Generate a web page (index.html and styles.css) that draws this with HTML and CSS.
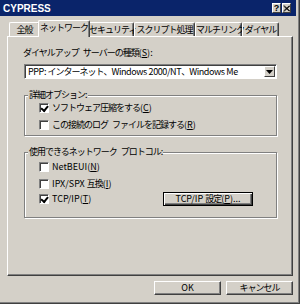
FILE: index.html
```html
<!DOCTYPE html>
<html lang="ja">

<head>
    <meta charset="UTF-8">
    <title>CYPRESS</title>
    <link rel="stylesheet" href="styles.css">
</head>

<body>
    <div class="window">
        <div class="titlebar">
            <span class="title">CYPRESS</span>
            <div class="caption-buttons">
                <span class="cap-btn help">?</span>
                <span class="cap-btn">
                    <svg width="8" height="7" viewBox="0 0 8 7">
                        <path d="M0.5 0.5 L7 6.5 M1.5 0.5 L8 6.5 M7 0.5 L0.5 6.5 M8 0.5 L1.5 6.5" stroke="#000" stroke-width="1" />
                    </svg>
                </span>
            </div>
        </div>

        <div class="content">
            <div class="tabs">
                <div class="tab">全般</div>
                <div class="tab active">ネットワーク</div>
                <div class="tab">セキュリティ</div>
                <div class="tab">スクリプト処理</div>
                <div class="tab">マルチリンク</div>
                <div class="tab">ダイヤル</div>
            </div>

            <div class="panel">
                <div class="field-label">ダイヤルアップ サーバーの種類<span class="en">(<u>S</u>):</span></div>
                <div class="select">
                    <span class="select-text"><span class="en">PPP: </span>インターネット、<span class="en">Windows 2000/NT</span>、<span class="en">Windows Me</span></span>
                    <span class="select-btn">
                        <svg width="7" height="4" viewBox="0 0 7 4">
                            <path d="M0 0 H7 L3.5 4 Z" fill="#000" />
                        </svg>
                    </span>
                </div>

                <fieldset class="group">
                    <legend>詳細オプション:</legend>
                    <div class="check">
                        <span class="box checked"></span>ソフトウェア圧縮をする<span class="en">(<u>C</u>)</span>
                    </div>
                    <div class="check">
                        <span class="box"></span>この接続のログ ファイルを記録する<span class="en">(<u>R</u>)</span>
                    </div>
                </fieldset>

                <fieldset class="group protocols">
                    <legend>使用できるネットワーク プロトコル:</legend>
                    <div class="check">
                        <span class="box"></span><span class="en">NetBEUI(<u>N</u>)</span>
                    </div>
                    <div class="check">
                        <span class="box"></span><span class="en">IPX/SPX&nbsp;</span>互換<span class="en">(<u>I</u>)</span>
                    </div>
                    <div class="check tcp">
                        <span class="box checked"></span><span class="en">TCP/IP(<u>T</u>)</span>
                        <div class="btn default"><span class="en">TCP/IP&nbsp;</span>設定<span class="en">(<u>P</u>)...</span></div>
                    </div>
                </fieldset>
            </div>

            <div class="footer">
                <div class="btn"><span class="en">OK</span></div>
                <div class="btn">キャンセル</div>
            </div>
        </div>
    </div>
</body>

</html>
```

FILE: styles.css
```css
body {
    margin: 0;
    font-family: "Noto Sans CJK JP", sans-serif;
    font-size: 9px;
    letter-spacing: -1px;
    word-spacing: 3px;
    color: #000;
}

.en {
    letter-spacing: 0;
    word-spacing: 0;
}

u {
    text-decoration: underline;
    text-underline-offset: 1px;
}

.window {
    width: 300px;
    height: 304px;
    box-sizing: border-box;
    background-color: #d4d0c8;
    border-right: 1px solid #404040;
    border-bottom: 1px solid #404040;
    box-shadow: inset -1px -1px #808080;
    overflow: hidden;
}

.titlebar {
    height: 16px;
    width: 296px;
    background-color: #0a246a;
    display: flex;
    align-items: center;
    justify-content: space-between;
}

.title {
    font-family: "Liberation Sans", sans-serif;
    font-weight: bold;
    font-size: 10px;
    letter-spacing: 0;
    color: #fff;
    padding-left: 3px;
}

.caption-buttons {
    display: flex;
    gap: 1px;
    padding-right: 5px;
}

.cap-btn {
    width: 9px;
    height: 10px;
    box-sizing: border-box;
    background-color: #d4d0c8;
    border-top: 1px solid #fff;
    border-left: 1px solid #fff;
    border-right: 1px solid #404040;
    border-bottom: 1px solid #404040;
    display: flex;
    align-items: center;
    justify-content: center;
}

.cap-btn.help {
    font-family: "Liberation Sans", sans-serif;
    font-weight: bold;
    font-size: 9px;
    letter-spacing: 0;
    line-height: 8px;
}

.content {
    padding: 4px 6px 0 7px;
}

.tabs {
    display: flex;
    align-items: flex-end;
    height: 16px;
    padding-left: 2px;
    position: relative;
    z-index: 1;
}

.tab {
    height: 14px;
    box-sizing: border-box;
    text-align: center;
    white-space: nowrap;
    line-height: 13px;
    border-top: 1px solid #fff;
    border-left: 1px solid #fff;
    border-right: 1px solid #404040;
    border-radius: 2px 2px 0 0;
    box-shadow: inset -1px 0 #808080;
}

.tab:nth-child(1) { width: 31px; }
.tab:nth-child(2) { width: 52px; }
.tab:nth-child(3) { width: 46px; }
.tab:nth-child(4) { width: 61px; }
.tab:nth-child(5) { width: 47px; }
.tab:nth-child(6) { width: 37px; }

.tab.active {
    height: 17px;
    margin: 0 -2px -1px;
    line-height: 14px;
    background-color: #d4d0c8;
    position: relative;
    z-index: 2;
}

.panel {
    height: 240px;
    box-sizing: border-box;
    padding: 10px 16px 0 16px;
    border-top: 1px solid #fff;
    border-left: 1px solid #fff;
    border-right: 1px solid #404040;
    border-bottom: 1px solid #404040;
    box-shadow: inset -1px -1px #808080;
}

.field-label {
    line-height: 12px;
    margin-bottom: 5px;
    margin-left: -1px;
}

.select {
    height: 15px;
    width: 253px;
    box-sizing: border-box;
    background-color: #fff;
    border-top: 1px solid #808080;
    border-left: 1px solid #808080;
    border-right: 1px solid #fff;
    border-bottom: 1px solid #fff;
    box-shadow: inset 1px 1px #404040;
    display: flex;
    align-items: center;
    padding: 1px 1px 1px 3px;
}

.select-text {
    flex: 1;
    line-height: 12px;
    white-space: nowrap;
    word-spacing: 0;
}

.select-text .en {
    letter-spacing: -0.4px;
}

.select-btn {
    width: 11px;
    height: 11px;
    box-sizing: border-box;
    background-color: #d4d0c8;
    border-top: 1px solid #fff;
    border-left: 1px solid #fff;
    border-right: 1px solid #404040;
    border-bottom: 1px solid #404040;
    display: flex;
    align-items: center;
    justify-content: center;
}

.group {
    margin: 10px 0 0;
    width: 253px;
    box-sizing: border-box;
    padding: 0 8px 4px 14px;
    border: 1px solid #808080;
    box-shadow: inset 1px 1px #fff, 1px 1px #fff;
}

.group legend {
    margin-left: -11px;
    padding: 0 1px;
    line-height: 12px;
    background-color: #d4d0c8;
}

.check {
    display: flex;
    align-items: center;
    height: 13px;
    line-height: 12px;
    margin-top: 4px;
    white-space: nowrap;
}

.check:first-of-type {
    margin-top: 0;
}

.box {
    width: 10px;
    height: 10px;
    box-sizing: border-box;
    margin-right: 3px;
    background-color: #fff;
    border-top: 1px solid #808080;
    border-left: 1px solid #808080;
    border-right: 1px solid #fff;
    border-bottom: 1px solid #fff;
    box-shadow: inset 1px 1px #404040;
    flex-shrink: 0;
    position: relative;
}

.box.checked::after {
    content: "";
    position: absolute;
    left: 1px;
    top: 0;
    width: 5px;
    height: 3px;
    border-left: 2px solid #000;
    border-bottom: 2px solid #000;
    transform: rotate(-50deg) translate(-1px, 1px);
}

.protocols {
    padding-bottom: 12px;
}

.protocols .check:first-of-type {
    margin-top: 2px;
}

.check.tcp {
    margin-top: 2px;
}

.btn {
    width: 67px;
    height: 14px;
    box-sizing: border-box;
    text-align: center;
    white-space: nowrap;
    line-height: 11px;
    background-color: #d4d0c8;
    border-top: 1px solid #fff;
    border-left: 1px solid #fff;
    border-right: 1px solid #404040;
    border-bottom: 1px solid #404040;
    box-shadow: inset -1px -1px #808080;
}

.btn.default {
    width: 90px;
    margin-left: auto;
    margin-right: 15px;
    border: 1px solid #000;
    box-shadow: inset 1px 1px #fff, inset -1px -1px #404040, inset -2px -2px #808080;
}

.footer {
    display: flex;
    justify-content: flex-end;
    gap: 5px;
    margin-top: 5px;
}
```
